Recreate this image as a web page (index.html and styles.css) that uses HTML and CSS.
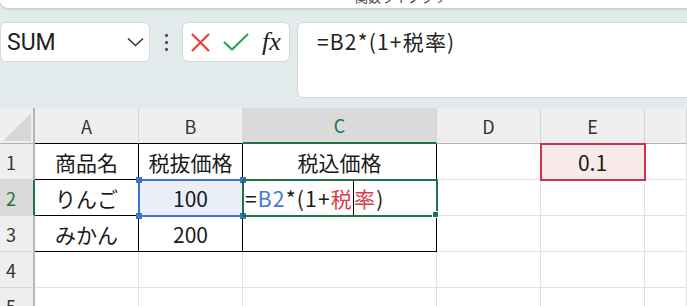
FILE: index.html
```html
<!DOCTYPE html>
<html lang="ja">
<head>
  <meta charset="UTF-8">
  <title>税込価格</title>
  <link rel="stylesheet" href="styles.css">
</head>
<body>

<div class="ribbon"><span class="ribbon-label">関数ライブラリ</span></div>

<div class="formula-bar">
  <div class="name-box">
    <span>SUM</span>
    <svg width="17" height="10" viewBox="0 0 17 10"><polyline points="1,1.5 8.5,8.5 16,1.5" fill="none" stroke="#333" stroke-width="1.6"/></svg>
  </div>
  <div class="more"><span></span><span></span><span></span></div>
  <div class="fx-box">
    <svg width="19" height="19" viewBox="0 0 19 19"><path d="M1 1 L18 18 M18 1 L1 18" stroke="#e8433d" stroke-width="2.2" fill="none"/></svg>
    <svg width="26" height="18" viewBox="0 0 26 18"><polyline points="1,9 9,16.5 25,1" fill="none" stroke="#36a052" stroke-width="2.2"/></svg>
    <span class="fx">fx</span>
  </div>
  <div class="formula-input">=B2*(1+税率)</div>
</div>

<div class="sheet">
  <div class="cell corner"><svg width="28" height="28" viewBox="0 0 28 28"><polygon points="28,0 28,28 0,28" fill="#d7d7d7"/></svg></div>
  <div class="cell hd edge">A</div>
  <div class="cell hd edge">B</div>
  <div class="cell hd sel">C</div>
  <div class="cell hd">D</div>
  <div class="cell hd">E</div>
  <div class="cell hd"></div>

  <div class="cell rh">1</div>
  <div class="cell tb">商品名</div>
  <div class="cell tb">税抜価格</div>
  <div class="cell tb">税込価格</div>
  <div class="cell"></div>
  <div class="cell ref-red">0.1</div>
  <div class="cell"></div>

  <div class="cell rh sel">2</div>
  <div class="cell tb">りんご</div>
  <div class="cell tb ref-blue">100</div>
  <div class="cell tb active">=<span class="blue">B2</span>*(1+<span class="red">税</span><span class="caret"></span><span class="red">率</span>)</div>
  <div class="cell"></div>
  <div class="cell"></div>
  <div class="cell"></div>

  <div class="cell rh">3</div>
  <div class="cell tb">みかん</div>
  <div class="cell tb">200</div>
  <div class="cell tb"></div>
  <div class="cell"></div>
  <div class="cell"></div>
  <div class="cell"></div>

  <div class="cell rh">4</div>
  <div class="cell"></div>
  <div class="cell"></div>
  <div class="cell"></div>
  <div class="cell"></div>
  <div class="cell"></div>
  <div class="cell"></div>

  <div class="cell rh">5</div>
  <div class="cell"></div>
  <div class="cell"></div>
  <div class="cell"></div>
  <div class="cell"></div>
  <div class="cell"></div>
  <div class="cell"></div>
</div>

</body>
</html>
```

FILE: styles.css
```css
body {
  margin: 0;
  height: 306px;
  overflow: hidden;
  background: #e2eaec;
  font-family: "Noto Sans CJK JP", sans-serif;
}
.ribbon {
  height: 8px;
  margin-right: -10px;
  background: #fff;
  border-radius: 0 0 8px 8px;
  box-shadow: 0 1px 3px rgba(0, 0, 0, 0.18);
  overflow: hidden;
}
.ribbon-label {
  display: block;
  margin-top: -11px;
  padding-left: 355px;
  font-size: 13px;
  line-height: 16px;
  color: #444;
}
.formula-bar {
  display: flex;
  align-items: flex-start;
  height: 76px;
  margin: 14px 0 10px;
}
.name-box {
  box-sizing: border-box;
  width: 150px;
  height: 40px;
  display: flex;
  align-items: center;
  justify-content: space-between;
  padding: 0 5px 0 6px;
  background: #fff;
  border: 1px solid #d5d9da;
  border-radius: 6px;
}
.name-box span {
  font-family: Roboto, sans-serif;
  font-size: 23px;
  color: #222;
}
.more {
  width: 32px;
  height: 40px;
  display: flex;
  flex-direction: column;
  align-items: center;
  justify-content: center;
  gap: 4px;
}
.more span {
  width: 3px;
  height: 3px;
  background: #555;
  border-radius: 1px;
}
.fx-box {
  box-sizing: border-box;
  width: 108px;
  height: 40px;
  display: flex;
  align-items: center;
  gap: 13px;
  padding-left: 8px;
  background: #fff;
  border: 1px solid #d5d9da;
  border-radius: 6px;
}
.fx {
  font-family: "Liberation Serif", serif;
  font-style: italic;
  font-size: 26px;
  color: #222;
}
.formula-input {
  flex: 1;
  box-sizing: border-box;
  height: 76px;
  margin: 0 -10px 0 7px;
  padding: 3px 19px;
  background: #fff;
  border: 1px solid #d5d9da;
  border-radius: 6px;
  font-size: 21px;
  letter-spacing: 1.2px;
  color: #222;
}
.sheet {
  display: grid;
  grid-template-columns: 35px 104px 104px 194px 104px 104px 1fr;
  grid-auto-rows: 36px;
  background: #fff;
}
.cell {
  box-sizing: border-box;
  display: flex;
  align-items: center;
  justify-content: center;
  border-right: 1px solid #e1e1e1;
  border-bottom: 1px solid #e1e1e1;
  font-size: 21px;
  color: #1a1a1a;
}
.hd {
  background: #efefef;
  border-right-color: #d6d6d6;
  border-bottom-color: #b4b4b4;
  font-size: 18px;
  color: #333;
}
.hd.edge {
  border-bottom-color: #000;
}
.corner {
  background: #efefef;
  border-right: 2px solid #b4b4b4;
  border-bottom-color: #b4b4b4;
  align-items: flex-end;
  justify-content: flex-end;
  padding: 0 2px 2px 0;
}
.rh {
  background: #efefef;
  border-right: 2px solid #b4b4b4;
  border-bottom-color: #d6d6d6;
  justify-content: flex-start;
  padding-left: 6px;
  font-size: 18px;
  color: #333;
}
.hd.sel,
.rh.sel {
  background: #dadada;
  color: #217346;
}
.hd.sel {
  border-bottom: 2px solid #217346;
}
.rh.sel {
  border-right-color: #217346;
}
.tb {
  border-right-color: #000;
  border-bottom-color: #000;
}
.ref-blue {
  position: relative;
  z-index: 1;
  background: #e9eef8;
  outline: 2px solid #3b73cd;
  outline-offset: -1px;
}
.ref-blue::before {
  content: "";
  position: absolute;
  left: -3px;
  top: -3px;
  width: 6px;
  height: 6px;
  background: #3b73cd;
  box-shadow: 104px 0 #3b73cd, 0 36px #3b73cd, 104px 36px #3b73cd;
}
.ref-red {
  position: relative;
  z-index: 1;
  background: #f9eaea;
  outline: 2px solid #c8364a;
  outline-offset: -1px;
}
.active {
  position: relative;
  z-index: 2;
  justify-content: flex-start;
  padding-left: 2px;
  letter-spacing: 1.2px;
  outline: 2px solid #217346;
  outline-offset: -1px;
}
.active::after {
  content: "";
  position: absolute;
  right: -3px;
  bottom: -3px;
  width: 5px;
  height: 5px;
  background: #217346;
  border: 1px solid #fff;
}
.blue {
  color: #4577d6;
}
.red {
  color: #d93a4c;
}
.caret {
  align-self: stretch;
  width: 1px;
  background: #000;
}
```
